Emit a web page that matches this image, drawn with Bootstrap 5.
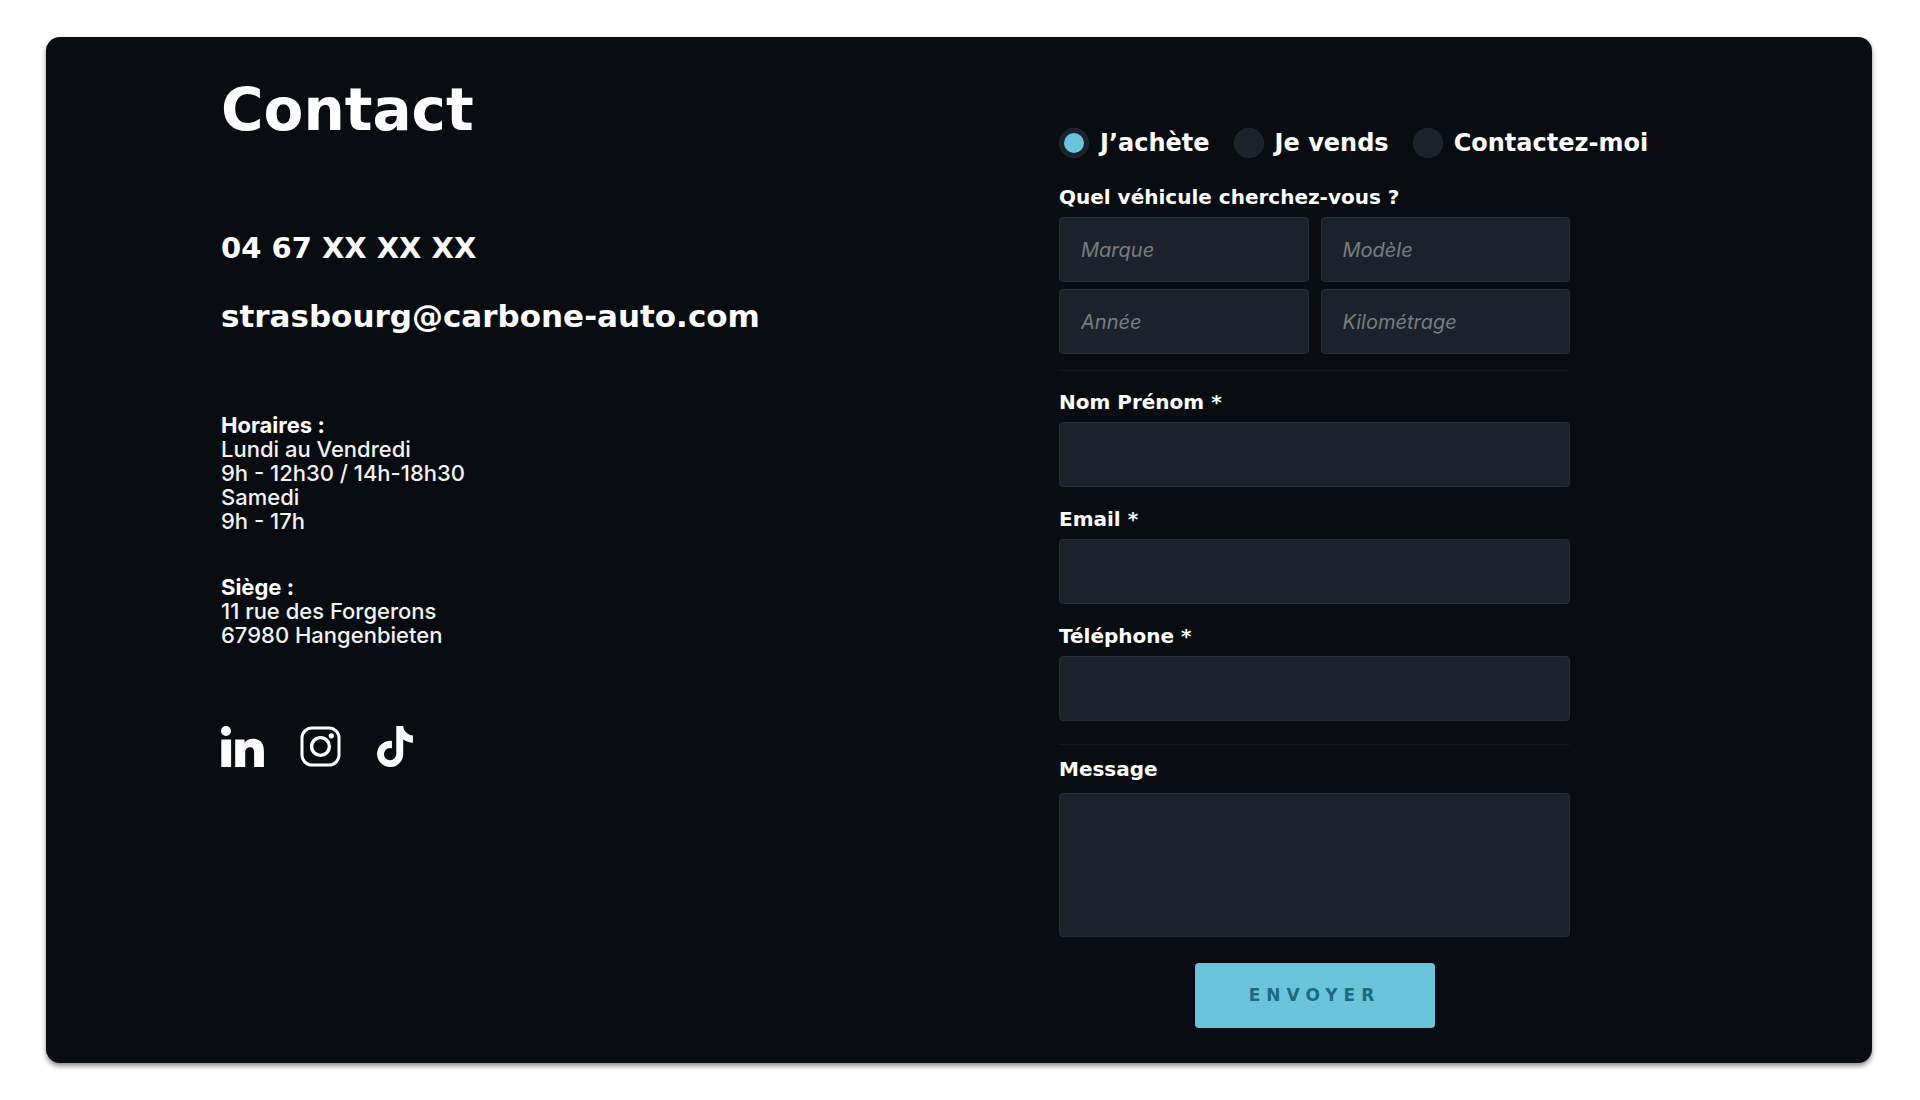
<!DOCTYPE html>
<html lang="fr">
<head>
<meta charset="utf-8">
<meta name="viewport" content="width=device-width, initial-scale=1">
<title>Contact</title>
<link href="https://cdn.jsdelivr.net/npm/bootstrap@5.3.0/dist/css/bootstrap.min.css" rel="stylesheet">
<style>
  :root { --ink: #090d11; --field: #1b222b; --edge: #282e35; --cyan: #6ac5dc; }
  body { background: #fff; font-family: Inter, "Liberation Sans", sans-serif; padding: 37px 48px 37px 46px; }
  .panel { background: var(--ink); border-radius: 14px; box-shadow: 0 3px 5px rgba(0,0,0,.45); padding: 0 175px 35px; }
  .wide { font-family: "DejaVu Sans", sans-serif; font-weight: 700; }
  .infos { flex: 1 1 0; padding-top: 41px; }
  .demande { flex: 0 0 638px; padding-top: 91px; }
  .titre { font-size: 58px; line-height: 64px; margin-bottom: 88px; }
  .tel { font-size: 29px; line-height: 36px; margin-bottom: 32px; }
  .mel { font-size: 31px; line-height: 36px; margin-bottom: 79px; }
  .bloc { font-size: 22px; line-height: 24px; font-weight: 500; color: #f2f2f3; margin-bottom: 42px; }
  .bloc strong { color: #fff; }
  .reseaux { gap: 36px; margin-top: 79px; }
  .reseaux svg { display: block; height: 41px; }
  .choix { gap: 24px; margin-bottom: 27px; }
  .option { gap: 11px; }
  .choix label { font-size: 24px; line-height: 30px; }
  .choix .form-check-input { width: 30px; height: 30px; background: var(--field); border: 5px solid var(--field); outline: 1px solid #22282f; outline-offset: -1px; }
  .choix .form-check-input:checked { background: var(--cyan); }
  .intitule { display: block; font-size: 20px; line-height: 24px; margin-bottom: 8px; }
  .champs { max-width: 511px; }
  .champs .form-control { height: 65px; background: var(--field); border: 1px solid var(--edge); border-radius: 4px; color: #fff; font-size: 20px; padding: 0 21px; }
  .champs .form-control::placeholder { color: #7b7d80; font-style: italic; opacity: 1; }
  .champs textarea.form-control { height: 144px; padding: 16px 21px; resize: none; }
  .vehicule { display: grid; grid-template-columns: 1fr 1fr; gap: 7px 12px; }
  .filet { border: 0; height: 1px; background: #14181d; opacity: 1; margin: 16px 0 19px; }
  .coord { display: grid; gap: 20px; margin-bottom: 23px; }
  .message .intitule { margin: 12px 0; }
  .envoi { width: 240px; height: 65px; margin-top: 26px; background: var(--cyan); color: #1b6b7e; border: 0; border-radius: 4px; font-size: 17px; letter-spacing: 6px; }
  @media (max-width: 1500px) {
    .panel { padding: 0 32px 35px; }
    .panel > .d-flex { flex-wrap: wrap; }
    .infos, .demande { flex: 1 1 100%; }
    .choix { flex-wrap: wrap; }
  }
</style>
</head>
<body>
<main class="panel text-white">
  <div class="d-flex">
    <section class="infos">
      <h1 class="titre wide">Contact</h1>
      <a class="tel wide d-block text-white text-decoration-none" href="tel:+33467">04 67 XX XX XX</a>
      <a class="mel wide d-block text-white text-decoration-none" href="mailto:strasbourg@carbone-auto.com">strasbourg@carbone-auto.com</a>
      <p class="bloc"><strong>Horaires :</strong><br>Lundi au Vendredi<br>9h - 12h30 / 14h-18h30<br>Samedi<br>9h - 17h</p>
      <address class="bloc"><strong>Siège :</strong><br>11 rue des Forgerons<br>67980 Hangenbieten</address>
      <nav class="reseaux d-flex" aria-label="Réseaux sociaux">
        <a class="text-white" href="#" aria-label="LinkedIn">
          <svg width="43" height="41" viewBox="0 0 43 41" fill="currentColor"><circle cx="5" cy="5" r="5"/><path d="M.3 13.4h9.8V41H.3zM14.200 13.400h9.300v3.700c1.400-2.500 4.400-4.300 8.200-4.300 8 0 11.200 4.700 11.200 12.800V41h-9.800V27c0-3.800-1-5.800-4.100-5.800-3.400 0-4.800 2.400-4.800 5.800v14h-10z"/></svg>
        </a>
        <a class="text-white" href="#" aria-label="Instagram">
          <svg width="41" height="41" viewBox="0 0 41 41" fill="none" stroke="currentColor"><rect x="2" y="2" width="37" height="37" rx="10" stroke-width="3"/><circle cx="20.500" cy="20.500" r="8.900" stroke-width="3.400"/><circle cx="31.300" cy="9.800" r="2.600" fill="currentColor" stroke="none"/></svg>
        </a>
        <a class="text-white" href="#" aria-label="TikTok">
          <svg width="36" height="41" viewBox="1 0 14 16" fill="currentColor"><path d="M8.500 0h2.700c.1 1.900 1.600 3.500 3.800 3.700v2.800c-1.400 0-2.700-.4-3.800-1.200v5.600a5.100 5.100 0 1 1-4.400-5.050v2.800a2.400 2.400 0 1 0 1.700 2.250z"/></svg>
        </a>
      </nav>
    </section>

    <form class="demande">
      <div class="choix d-flex">
        <div class="option d-flex align-items-center">
          <input class="form-check-input m-0 flex-shrink-0" type="radio" name="objet" id="achat" checked>
          <label class="wide text-nowrap" for="achat">J’achète</label>
        </div>
        <div class="option d-flex align-items-center">
          <input class="form-check-input m-0 flex-shrink-0" type="radio" name="objet" id="vente">
          <label class="wide text-nowrap" for="vente">Je vends</label>
        </div>
        <div class="option d-flex align-items-center">
          <input class="form-check-input m-0 flex-shrink-0" type="radio" name="objet" id="autre">
          <label class="wide text-nowrap" for="autre">Contactez-moi</label>
        </div>
      </div>

      <div class="champs">
        <label class="intitule wide" for="marque">Quel véhicule cherchez-vous ?</label>
        <div class="vehicule">
          <input class="form-control" id="marque" type="text" placeholder="Marque">
          <input class="form-control" type="text" placeholder="Modèle" aria-label="Modèle">
          <input class="form-control" type="text" placeholder="Année" aria-label="Année">
          <input class="form-control" type="text" placeholder="Kilométrage" aria-label="Kilométrage">
        </div>
        <hr class="filet">
        <div class="coord">
          <div><label class="intitule wide" for="nom">Nom Prénom *</label><input class="form-control" id="nom" type="text"></div>
          <div><label class="intitule wide" for="email">Email *</label><input class="form-control" id="email" type="email"></div>
          <div><label class="intitule wide" for="phone">Téléphone *</label><input class="form-control" id="phone" type="tel"></div>
        </div>
        <hr class="filet mb-0">
        <div class="message">
          <label class="intitule wide" for="message">Message</label>
          <textarea class="form-control d-block" id="message"></textarea>
        </div>
        <div class="text-center"><button class="envoi wide" type="submit">ENVOYER</button></div>
      </div>
    </form>
  </div>
</main>
<script src="https://cdn.jsdelivr.net/npm/bootstrap@5.3.0/dist/js/bootstrap.bundle.min.js"></script>
</body>
</html>
